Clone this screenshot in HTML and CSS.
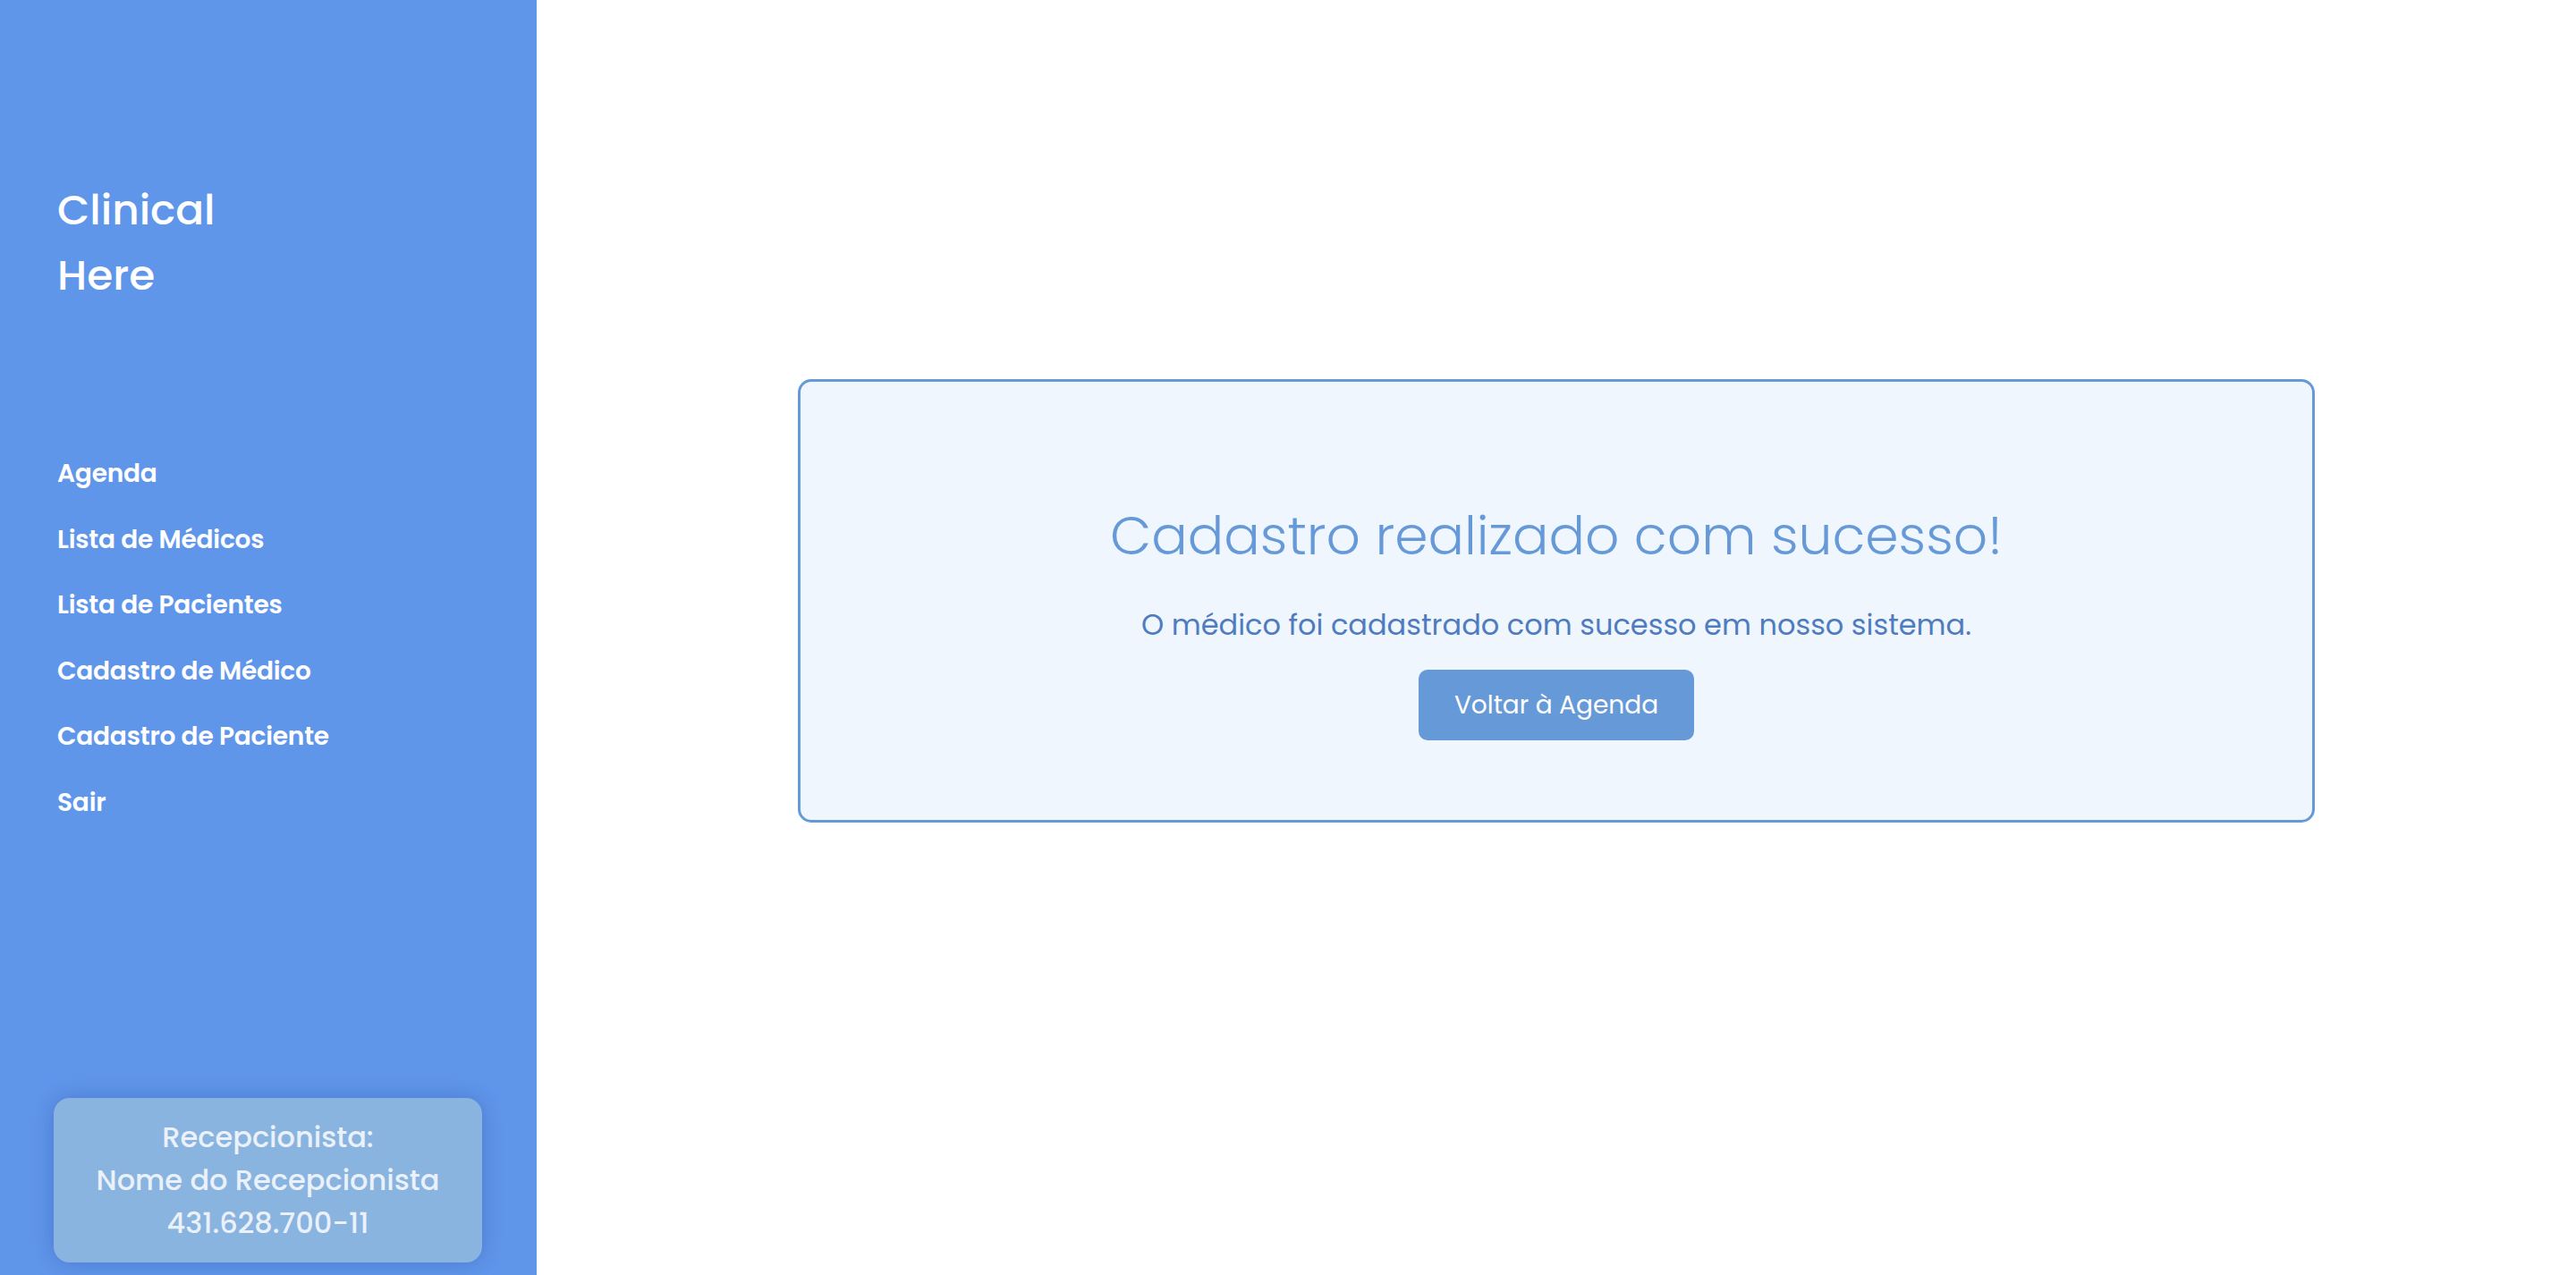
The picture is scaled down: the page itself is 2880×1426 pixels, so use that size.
FILE: index.html
```html
<!DOCTYPE html>
<html lang="pt-BR">
<head>
<meta charset="utf-8">
<title>Clinical Here</title>
<link rel="stylesheet" href="styles.css">
</head>
<body>
<aside class="sidebar">
  <div class="brand">Clinical<br>Here</div>
  <nav class="nav">
    <a href="#">Agenda</a>
    <a href="#">Lista de Médicos</a>
    <a href="#">Lista de Pacientes</a>
    <a href="#">Cadastro de Médico</a>
    <a href="#">Cadastro de Paciente</a>
    <a href="#">Sair</a>
  </nav>
  <div class="user-box">
    <div>Recepcionista:</div>
    <div>Nome do Recepcionista</div>
    <div>431.628.700-11</div>
  </div>
</aside>
<main class="main">
  <section class="card">
    <h1 class="card-title">Cadastro realizado com sucesso!</h1>
    <p class="card-text">O médico foi cadastrado com sucesso em nosso sistema.</p>
    <a class="btn" href="#">Voltar à Agenda</a>
  </section>
</main>
</body>
</html>
```

FILE: styles.css
```css
* { box-sizing: border-box; }
html, body { height: 100%; }
body {
  margin: 0;
  display: flex;
  font-family: Poppins, "Open Sans", sans-serif;
  background: #ffffff;
  overflow: hidden;
}
.sidebar {
  width: 600px;
  flex: 0 0 600px;
  height: 100vh;
  background: #6096ea;
  display: flex;
  flex-direction: column;
  padding: 198px 0 14px 64px;
  color: #ffffff;
}
.brand {
  font-size: 47px;
  font-weight: 500;
  line-height: 73px;
}
.nav {
  display: flex;
  flex-direction: column;
  margin-top: 149px;
}
.nav a {
  color: #ffffff;
  text-decoration: none;
  font-size: 28px;
  font-weight: 600;
  line-height: 73.5px;
  letter-spacing: -0.2px;
}
.user-box {
  margin-top: auto;
  margin-left: -4px;
  width: 479px;
  height: 184px;
  border-radius: 18px;
  background: #8ab4e0;
  box-shadow: 0 0 24px rgba(40, 80, 170, 0.4);
  color: #eaf1f9;
  text-align: center;
  font-size: 32px;
  font-weight: 500;
  line-height: 48px;
  padding-top: 20px;
}
.main {
  flex: 1;
  display: flex;
  justify-content: center;
  align-items: flex-start;
  padding-top: 424px;
}
.card {
  width: 1696px;
  height: 496px;
  border: 3px solid #6699d8;
  border-radius: 15px;
  background: #f0f6fe;
  display: flex;
  flex-direction: column;
  align-items: center;
  padding-top: 136px;
}
.card-title {
  margin: 0;
  font-size: 60px;
  font-weight: 300;
  line-height: 72px;
  color: #6699d8;
}
.card-text {
  margin: 42px 0 0;
  font-size: 32px;
  font-weight: 400;
  line-height: 44px;
  color: #4f7bbf;
}
.btn {
  margin-top: 28px;
  display: inline-flex;
  align-items: center;
  justify-content: center;
  width: 308px;
  height: 79px;
  border-radius: 10px;
  background: #6699d8;
  color: #ffffff;
  text-decoration: none;
  font-size: 28px;
  font-weight: 400;
}
```
